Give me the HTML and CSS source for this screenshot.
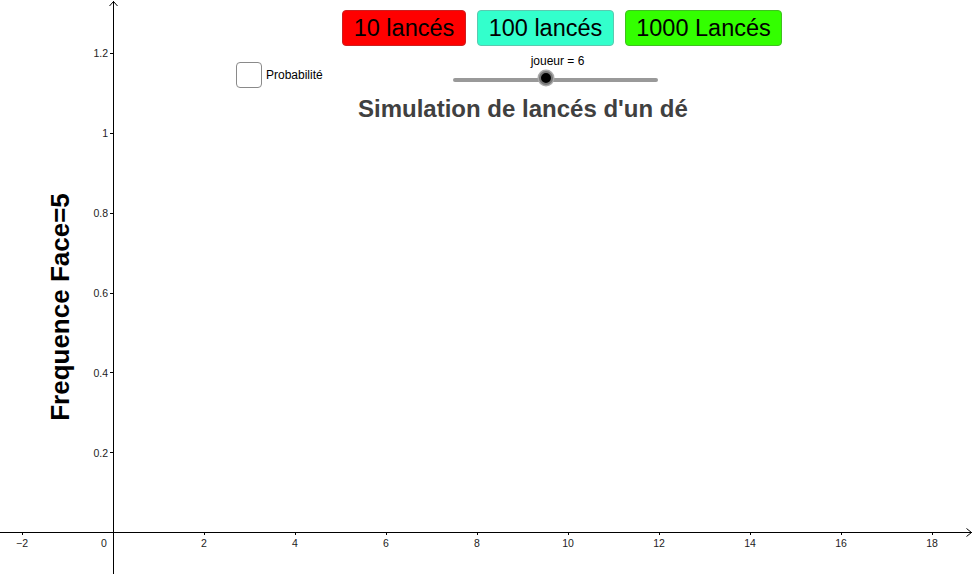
FILE: index.html
```html
<!DOCTYPE html>
<html lang="fr">
<head>
<meta charset="utf-8">
<title>Simulation de lancés d'un dé</title>
<link rel="stylesheet" href="styles.css">
</head>
<body>
<div class="canvas">
  <svg class="axes" width="975" height="574" viewBox="0 0 975 574">
    <g stroke="#000" stroke-width="1" fill="none">
      <line x1="113.5" y1="1" x2="113.5" y2="574"/>
      <polyline points="109.5,6 113.5,1.5 117.5,6"/>
      <line x1="0" y1="532.5" x2="972" y2="532.5"/>
      <polyline points="966.5,528.5 971.5,532.5 966.5,536.5"/>
      <!-- x ticks -->
      <line x1="22.5" y1="532" x2="22.5" y2="535"/>
      <line x1="204.5" y1="532" x2="204.5" y2="535"/>
      <line x1="295.5" y1="532" x2="295.5" y2="535"/>
      <line x1="386.5" y1="532" x2="386.5" y2="535"/>
      <line x1="477.5" y1="532" x2="477.5" y2="535"/>
      <line x1="568.5" y1="532" x2="568.5" y2="535"/>
      <line x1="659.5" y1="532" x2="659.5" y2="535"/>
      <line x1="750.5" y1="532" x2="750.5" y2="535"/>
      <line x1="841.5" y1="532" x2="841.5" y2="535"/>
      <line x1="932.5" y1="532" x2="932.5" y2="535"/>
      <!-- y ticks -->
      <line x1="110" y1="452.5" x2="113" y2="452.5"/>
      <line x1="110" y1="372.5" x2="113" y2="372.5"/>
      <line x1="110" y1="293.5" x2="113" y2="293.5"/>
      <line x1="110" y1="213.5" x2="113" y2="213.5"/>
      <line x1="110" y1="133.5" x2="113" y2="133.5"/>
      <line x1="110" y1="53.5" x2="113" y2="53.5"/>
    </g>
    <g class="ticklabel" text-anchor="middle">
      <text x="22" y="547">−2</text>
      <text x="104" y="547">0</text>
      <text x="204" y="547">2</text>
      <text x="295" y="547">4</text>
      <text x="386" y="547">6</text>
      <text x="477" y="547">8</text>
      <text x="568" y="547">10</text>
      <text x="659" y="547">12</text>
      <text x="750" y="547">14</text>
      <text x="841" y="547">16</text>
      <text x="932" y="547">18</text>
    </g>
    <g class="ticklabel" text-anchor="end">
      <text x="108" y="457">0.2</text>
      <text x="108" y="377">0.4</text>
      <text x="108" y="297">0.6</text>
      <text x="108" y="217">0.8</text>
      <text x="108" y="137">1</text>
      <text x="108" y="57">1.2</text>
    </g>
    <text class="ylabel" transform="translate(69,307) rotate(-90)" text-anchor="middle">Frequence Face=5</text>
  </svg>

  <div class="buttons">
    <button class="btn btn-red">10 lancés</button>
    <button class="btn btn-cyan">100 lancés</button>
    <button class="btn btn-green">1000 Lancés</button>
  </div>

  <label class="check">
    <span class="box"></span>
    <span class="check-text">Probabilité</span>
  </label>

  <div class="slider">
    <div class="slider-label">joueur = 6</div>
    <div class="track"><span class="knob"></span></div>
  </div>

  <h1 class="title">Simulation de lancés d'un dé</h1>
</div>
</body>
</html>
```
FILE: styles.css
```css
html, body {
  margin: 0;
  padding: 0;
  background: #fff;
}
body {
  font-family: "Liberation Sans", Arial, sans-serif;
  width: 975px;
  height: 574px;
  overflow: hidden;
}
.canvas {
  position: relative;
  width: 975px;
  height: 574px;
}
.axes {
  position: absolute;
  left: 0;
  top: 0;
}
.ticklabel {
  font-family: "Liberation Sans", Arial, sans-serif;
  font-size: 10.5px;
  fill: #222;
}
.ylabel {
  font-family: "Liberation Sans", Arial, sans-serif;
  font-weight: bold;
  font-size: 26px;
  fill: #000;
}
.buttons {
  position: absolute;
  left: 342px;
  top: 10px;
  display: flex;
  gap: 11px;
}
.btn {
  height: 36px;
  margin: 0;
  padding: 0;
  border-radius: 4px;
  font-family: "Liberation Sans", Arial, sans-serif;
  font-size: 23.5px;
  color: #000;
  line-height: 34px;
  box-sizing: border-box;
}
.btn-red {
  width: 124px;
  background: #ff0000;
  border: 1px solid #cc2020;
}
.btn-cyan {
  width: 137px;
  background: #33ffcc;
  border: 1px solid #5cc9b0;
}
.btn-green {
  width: 157px;
  background: #33ff00;
  border: 1px solid #40c020;
}
.check {
  position: absolute;
  left: 236px;
  top: 62px;
  display: flex;
  align-items: center;
  gap: 4px;
}
.box {
  width: 26px;
  height: 26px;
  box-sizing: border-box;
  border: 1px solid #8a8a8a;
  border-radius: 4px;
  background: #fff;
}
.check-text {
  font-size: 12px;
  color: #000;
}
.slider {
  position: absolute;
  left: 453px;
  top: 54px;
  width: 205px;
}
.slider-label {
  text-align: center;
  font-size: 12px;
  color: #000;
  padding-left: 4px;
  line-height: 15px;
}
.track {
  position: relative;
  margin-top: 9px;
  height: 4px;
  border-radius: 2px;
  background: #999;
}
.knob {
  position: absolute;
  left: 86px;
  top: -7px;
  width: 14px;
  height: 14px;
  border-radius: 50%;
  background: #000;
  border: 2px solid #777;
  box-sizing: border-box;
  box-shadow: 0 0 0 1.5px #aaa;
}
.title {
  position: absolute;
  left: 358px;
  top: 94px;
  margin: 0;
  font-size: 24px;
  font-weight: bold;
  color: #404040;
  line-height: 30px;
  white-space: nowrap;
}
```
